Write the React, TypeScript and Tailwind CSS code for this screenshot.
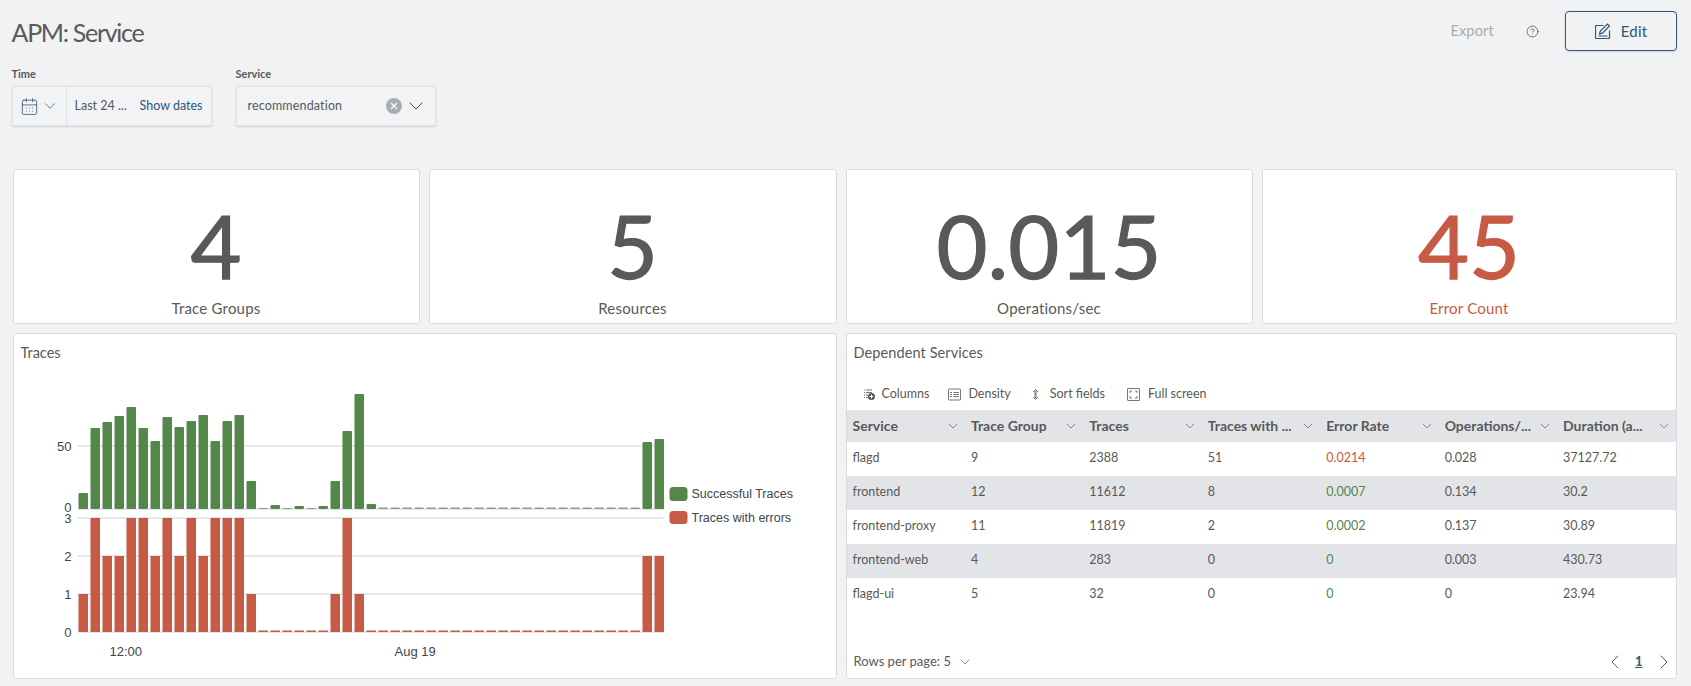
import { CalendarDays, ChevronDown, ChevronLeft, ChevronRight, CircleHelp, X } from "lucide-react";

const green = "#54874a";
const red = "#c75a45";

const okBars = [16, 81, 87, 93, 102, 81, 68, 92, 82, 88, 94, 68, 88, 94, 28, 1, 4, 1, 3, 1, 3, 28, 78, 115, 5];
const errBars = [1, 3, 2, 2, 3, 3, 2, 3, 2, 3, 2, 3, 3, 3, 1, 0, 0, 0, 0, 0, 0, 1, 3, 1];

const rows = [
  ["flagd", "9", "2388", "51", "0.0214", "0.028", "37127.72"],
  ["frontend", "12", "11612", "8", "0.0007", "0.134", "30.2"],
  ["frontend-proxy", "11", "11819", "2", "0.0002", "0.137", "30.89"],
  ["frontend-web", "4", "283", "0", "0", "0.003", "430.73"],
  ["flagd-ui", "5", "32", "0", "0", "0", "23.94"],
];

const headers = ["Service", "Trace Group", "Traces", "Traces with ...", "Error Rate", "Operations/...", "Duration (a..."];

function Stat({ value, label, danger }: { value: string; label: string; danger?: boolean }) {
  return (
    <div className={`flex h-[155px] flex-col items-center rounded-[3px] border border-[#d8dbe0] bg-white ${danger ? "text-[#c75a45]" : "text-[#595959]"}`}>
      <span className="mt-[30px] block text-[88px] leading-[90px] [-webkit-text-stroke:1.250px]">{value}</span>
      <span className="mt-[8px] block text-[15px] leading-5 tracking-[0.2px]">{label}</span>
    </div>
  );
}

function TracesChart() {
  const x = (i: number) => 78 + i * 12;
  const bars = Array.from({ length: 49 }, (_, i) => i);
  return (
    <svg width="822" height="300" viewBox="13.500 378 822 300" className="block" fontFamily="Liberation Sans, Arial, sans-serif">
      {[446, 509, 518, 556, 594, 632].map((y) => (
        <line key={y} x1="77" x2="664" y1={y} y2={y} stroke="#e6e8ec" strokeWidth="2" />
      ))}
      {bars.map((i) => {
        const h = i < okBars.length ? okBars[i] : i === 47 ? 67 : i === 48 ? 70 : 1.500;
        return <rect key={i} x={x(i)} y={509 - h} width="9.500" height={h} rx="1" fill={green} fillOpacity={h < 2 ? 0.7 : 1} />;
      })}
      {bars.map((i) => {
        const v = i < errBars.length ? errBars[i] : i > 46 ? 2 : 0;
        return <rect key={i} x={x(i)} y={v ? 632 - v * 38 : 630.500} width="9.500" height={v ? v * 38 : 1.500} fill={red} />;
      })}
      <g fill="#404552" fontSize="13" textAnchor="end">
        <text x="71" y="451">50</text>
        <text x="71" y="512">0</text>
        <text x="71" y="523">3</text>
        <text x="71" y="561">2</text>
        <text x="71" y="599">1</text>
        <text x="71" y="637">0</text>
      </g>
      <g fill="#404552" fontSize="12.500">
        <text x="109" y="656" fontSize="13">12:00</text>
        <text x="394" y="656" fontSize="13">Aug 19</text>
        <rect x="669" y="487" width="18" height="14" rx="3.500" fill={green} />
        <text x="691" y="498">Successful Traces</text>
        <rect x="669" y="511" width="18" height="13" rx="3.500" fill={red} />
        <text x="691" y="522">Traces with errors</text>
      </g>
    </svg>
  );
}

function EditIcon() {
  return (
    <svg width="16" height="16" viewBox="0 0 16 16" fill="none" stroke="currentColor" strokeWidth="1.200">
      <path d="M8.500 2.500H1.500a1 1 0 0 0-1 1v11a1 1 0 0 0 1 1h12a1 1 0 0 0 1-1V7.500" />
      <path d="M4.500 11 5.300 8 12.500 1l2 2-7 7.200zM3.500 13h9" />
    </svg>
  );
}

function ColumnsIcon() {
  return (
    <svg width="13" height="13" viewBox="0 0 13 13" fill="none" stroke="#565656">
      <path d="M3 2h6M3 4.500h6M3 7h2M3 9.500h2M1 2h1M1 4.500h1M1 7h1M1 9.500h1" strokeWidth="0.800" />
      <circle cx="8.500" cy="8.500" r="3.500" fill="#565656" stroke="none" />
      <path d="M6.500 8.500h4M8.500 6.500v4" stroke="#fff" />
    </svg>
  );
}

function DensityIcon() {
  return (
    <svg width="13" height="13" viewBox="0 0 13 13" fill="none" stroke="#565656" strokeWidth="0.800">
      <rect x="0.500" y="1" width="12" height="11" rx="0.500" />
      <path d="M2 4.500h2M5.500 4.500h5.500M2 6.500h2M5.500 6.500h5.500M2 8.500h2M5.500 8.500h5.500" />
    </svg>
  );
}

function SortIcon() {
  return (
    <svg width="11" height="13" viewBox="0 0 11 13" fill="none" stroke="#565656" strokeWidth="0.800">
      <path d="M3 4 5.500 1.500 8 4M3 9l2.500 2.500L8 9M5 2.500v8M6 2.500v8" />
    </svg>
  );
}

function FullIcon() {
  return (
    <svg width="13" height="13" viewBox="0 0 13 13" fill="none" stroke="#565656" strokeWidth="0.800">
      <rect x="0.500" y="0.500" width="12" height="12" rx="0.500" />
      <path d="M3 5V3h2M8 3h2v2M10 8v2H8M5 10H3V8" />
    </svg>
  );
}

export default function App() {
  return (
    <div className="h-[686px] overflow-hidden bg-[#f0f2f4] pl-[12.500px] pr-[14px] font-['Lato',sans-serif] text-[#595959]">
      <div className="flex h-[62px] items-start justify-between">
        <h1 className="-ml-[1px] mt-[14px] text-[25px] leading-[36px] tracking-[-1.300px]">APM: Service</h1>
        <div className="mt-[11px] flex items-center">
          <span className="text-[14.500px] tracking-[0.200px] text-[#ababab]">Export</span>
          <CircleHelp className="ml-[32px] h-[13px] w-[13px]" strokeWidth={1.500} />
          <button className="ml-[26px] flex h-[40px] w-[112px] items-center justify-center gap-[10px] rounded-[4px] border border-[#315577] text-[15px] tracking-[0.200px] text-[#315577] shadow-sm">
            <EditIcon />
            Edit
          </button>
        </div>
      </div>

      <div className="-ml-[1px] flex gap-[24px]">
        <div>
          <label className="block text-[11px] font-bold leading-[24px]">Time</label>
          <div className="flex h-[40px] w-[200px] items-center border border-[#dfe2e6] bg-[#f1f3f5] text-[12.500px] shadow-sm">
            <div className="flex h-full w-[54px] items-center justify-center gap-[2px] border-r border-[#dfe2e6] text-[#315577]">
              <CalendarDays className="h-[19px] w-[19px]" strokeWidth={1} />
              <ChevronDown className="h-[18px] w-[18px]" strokeWidth={1} />
            </div>
            <span className="ml-[8px]">Last 24 ...</span>
            <span className="ml-auto mr-[8px] text-[#315577]">Show dates</span>
          </div>
        </div>
        <div>
          <label className="block text-[11px] font-bold leading-[24px]">Service</label>
          <div className="flex h-[40px] w-[200px] items-center border border-[#dfe2e6] bg-[#f1f3f5] pl-[11px] pr-[11px] text-[12.500px] shadow-sm">
            <span className="tracking-[0.150px]">recommendation</span>
            <span className="ml-auto flex h-[16px] w-[16px] items-center justify-center rounded-full bg-[#a9adb2] text-white">
              <X className="h-[10px] w-[10px]" strokeWidth={3} />
            </span>
            <ChevronDown className="-mr-[4px] ml-[2px] h-[24px] w-[24px] text-[#404040]" strokeWidth={1} />
          </div>
        </div>
      </div>

      <div className="mt-[43px] grid grid-cols-[407px_408px_407px_415px] gap-[9px]">
        <Stat value="4" label="Trace Groups" />
        <Stat value="5" label="Resources" />
        <Stat value="0.015" label="Operations/sec" />
        <Stat value="45" label="Error Count" danger />
      </div>

      <div className="mt-[9px] grid h-[345px] grid-cols-[824px_831px] gap-[9px]">
        <div className="rounded-[3px] border border-[#d8dbe0] bg-white">
          <div className="h-[44px] px-[7px] pt-[9px] text-[14.500px] leading-5">Traces</div>
          <TracesChart />
        </div>

        <div className="flex flex-col rounded-[3px] border border-[#d8dbe0] bg-white">
          <div className="px-[7px] pt-[9px] text-[14.500px] leading-5 tracking-[0.100px]">Dependent Services</div>
          <div className="mb-[2px] mt-[17px] flex h-[28px] items-center pl-[16px] text-[12.500px]">
            <ColumnsIcon />
            <span className="ml-[6px]">Columns</span>
            <span className="ml-[19px]"><DensityIcon /></span>
            <span className="ml-[7px]">Density</span>
            <span className="ml-[19px]"><SortIcon /></span>
            <span className="ml-[9px]">Sort fields</span>
            <span className="ml-[22px]"><FullIcon /></span>
            <span className="ml-[8px]">Full screen</span>
          </div>
          <div className="grid h-[32px] grid-cols-7 items-center bg-[#e3e4e8] pb-[1px]">
            {headers.map((h) => (
              <div key={h} className="flex items-center justify-between pl-[6px] pr-[4px] text-[14px] font-bold">
                <span>{h}</span>
                <ChevronDown className="h-[16px] w-[16px]" strokeWidth={1} />
              </div>
            ))}
          </div>
          {rows.map((r, i) => (
            <div key={r[0]} className={`grid h-[34px] grid-cols-7 items-center pb-[2px] text-[12.500px] ${i % 2 ? "bg-[#e3e4e8]" : ""}`}>
              {r.map((c, j) => (
                <span key={j} className={`pl-[6px] ${j === 4 ? (i === 0 ? "text-[#c75a45]" : "text-[#54874a]") : ""}`}>{c}</span>
              ))}
            </div>
          ))}
          <div className="mt-auto flex h-[32px] items-center pl-[7px] text-[13px]">
            <span>Rows per page: 5</span>
            <ChevronDown className="ml-[6px] h-[16px] w-[16px]" strokeWidth={1} />
            <ChevronLeft className="ml-auto h-[24px] w-[24px]" strokeWidth={1} />
            <span className="ml-[8px] font-bold text-[#315577] underline">1</span>
            <ChevronRight className="ml-[9px] h-[24px] w-[24px]" strokeWidth={1} />
          </div>
        </div>
      </div>
    </div>
  );
}
